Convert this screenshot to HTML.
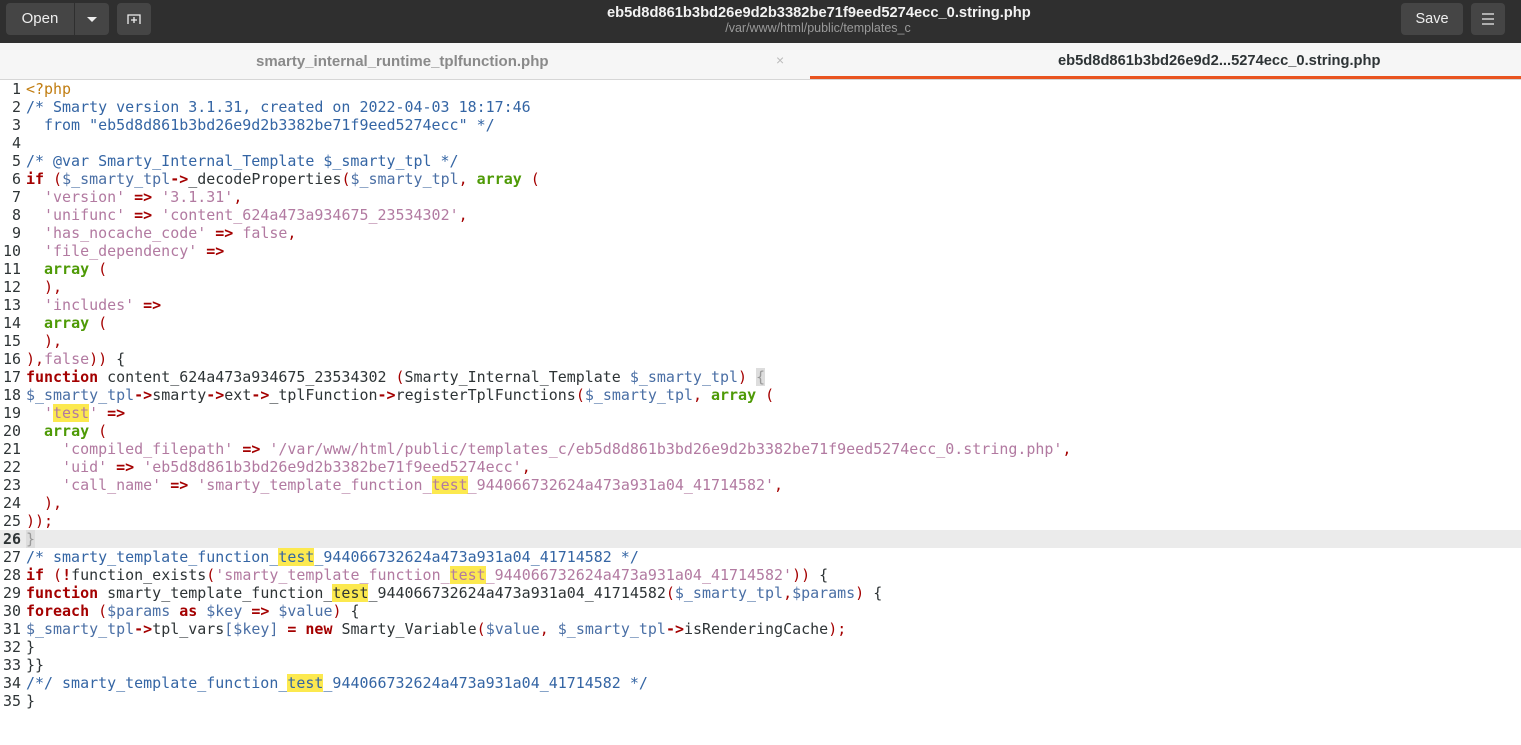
<!DOCTYPE html>
<html><head><meta charset="utf-8"><style>
*{margin:0;padding:0;box-sizing:border-box}
body{width:1521px;height:745px;overflow:hidden;background:#fff;font-family:"Liberation Sans",sans-serif;position:relative}
.hdr{position:absolute;left:0;top:0;width:1521px;height:43px;background:#2f2f2f}
.btn{position:absolute;background:#454545;border-radius:4px;color:#eee;font-size:15px;text-align:center}
.title{position:absolute;left:607px;top:5px;color:#f2f2f2;font-weight:bold;font-size:14.7px;white-space:nowrap}
.sub{position:absolute;left:0;width:1636px;top:21px;text-align:center;color:#9a9a9a;font-size:12.5px}
.tabs{position:absolute;left:0;top:43px;width:1521px;height:37px;background:#f6f6f6;border-bottom:1px solid #d6d6d6}
.tab{position:absolute;top:10px;font-size:14.7px;font-weight:bold;white-space:nowrap}
.code{position:absolute;left:0;top:80px;font-family:"DejaVu Sans Mono","Liberation Mono",monospace;font-size:14.97px;line-height:18px;color:#2e3436}
.ln{display:block;height:18px;white-space:pre}
.n{display:inline-block;width:21px;text-align:right;margin-right:5px;color:#2e3436}
.cur{background:#ebebeb;width:1521px}
.k{color:#a40000;font-weight:bold}.o{color:#a40000;font-weight:bold}.p{color:#a40000}
.s{color:#b27aa1}.c{color:#3465a4}.v{color:#4a6fa5}.g{color:#4e9a06;font-weight:bold}.pp{color:#c17d11}
.h{background:#fce94f}
</style></head><body>
<div class="hdr">
<div class="btn" style="left:6px;top:3px;height:32px;border-radius:4px 0 0 4px;line-height:32px;width:68px">Open</div>
<div class="btn" style="left:75px;top:3px;width:34px;height:32px;border-radius:0 4px 4px 0"><div style="position:absolute;left:12px;top:14px;width:0;height:0;border-left:5px solid transparent;border-right:5px solid transparent;border-top:5px solid #eee"></div></div>
<div class="btn" style="left:117px;top:3px;width:34px;height:32px"><svg width="34" height="32"><path d="M11 21V12h12v9M17 14v6M14 17h6" stroke="#eee" stroke-width="1.3" fill="none"/></svg></div>
<div class="title">eb5d8d861b3bd26e9d2b3382be71f9eed5274ecc_0.string.php</div>
<div class="sub">/var/www/html/public/templates_c</div>
<div class="btn" style="left:1401px;top:3px;width:62px;height:32px;line-height:32px;font-size:14.5px">Save</div>
<div class="btn" style="left:1471px;top:3px;width:34px;height:32px"><svg width="34" height="32"><path d="M11 11h12M11 16h12M11 21h12" stroke="#eee" stroke-width="1.2"/></svg></div>
</div>
<div class="tabs">
<div class="tab" style="left:256px;color:#8a8a8a;font-size:15px">smarty_internal_runtime_tplfunction.php</div>
<div style="position:absolute;left:776px;top:9px;color:#bbb;font-size:14px">×</div>
<div class="tab" style="left:1058px;color:#2e3436">eb5d8d861b3bd26e9d2...5274ecc_0.string.php</div>
<div style="position:absolute;left:810px;top:33px;width:711px;height:3px;background:#e95420"></div>
</div>
<div class="code">
<span class="ln"><span class="n">1</span><span class="pp">&lt;?php</span></span>
<span class="ln"><span class="n">2</span><span class="c">/* Smarty version 3.1.31, created on 2022-04-03 18:17:46</span></span>
<span class="ln"><span class="n">3</span><span class="c">  from "eb5d8d861b3bd26e9d2b3382be71f9eed5274ecc" */</span></span>
<span class="ln"><span class="n">4</span></span>
<span class="ln"><span class="n">5</span><span class="c">/* @var Smarty_Internal_Template $_smarty_tpl */</span></span>
<span class="ln"><span class="n">6</span><span class="k">if</span> <span class="p">(</span><span class="v">$_smarty_tpl</span><span class="o">-&gt;</span>_decodeProperties<span class="p">(</span><span class="v">$_smarty_tpl</span><span class="p">,</span> <span class="g">array</span> <span class="p">(</span></span>
<span class="ln"><span class="n">7</span>  <span class="s">'version'</span> <span class="o">=&gt;</span> <span class="s">'3.1.31'</span><span class="p">,</span></span>
<span class="ln"><span class="n">8</span>  <span class="s">'unifunc'</span> <span class="o">=&gt;</span> <span class="s">'content_624a473a934675_23534302'</span><span class="p">,</span></span>
<span class="ln"><span class="n">9</span>  <span class="s">'has_nocache_code'</span> <span class="o">=&gt;</span> <span class="s">false</span><span class="p">,</span></span>
<span class="ln"><span class="n">10</span>  <span class="s">'file_dependency'</span> <span class="o">=&gt;</span></span>
<span class="ln"><span class="n">11</span>  <span class="g">array</span> <span class="p">(</span></span>
<span class="ln"><span class="n">12</span>  <span class="p">),</span></span>
<span class="ln"><span class="n">13</span>  <span class="s">'includes'</span> <span class="o">=&gt;</span></span>
<span class="ln"><span class="n">14</span>  <span class="g">array</span> <span class="p">(</span></span>
<span class="ln"><span class="n">15</span>  <span class="p">),</span></span>
<span class="ln"><span class="n">16</span><span class="p">),</span><span class="s">false</span><span class="p">))</span> {</span>
<span class="ln"><span class="n">17</span><span class="k">function</span> content_624a473a934675_23534302 <span class="p">(</span>Smarty_Internal_Template <span class="v">$_smarty_tpl</span><span class="p">)</span> <span style="background:#ddd;color:#999">{</span></span>
<span class="ln"><span class="n">18</span><span class="v">$_smarty_tpl</span><span class="o">-&gt;</span>smarty<span class="o">-&gt;</span>ext<span class="o">-&gt;</span>_tplFunction<span class="o">-&gt;</span>registerTplFunctions<span class="p">(</span><span class="v">$_smarty_tpl</span><span class="p">,</span> <span class="g">array</span> <span class="p">(</span></span>
<span class="ln"><span class="n">19</span>  <span class="s">'<span class="h">test</span>'</span> <span class="o">=&gt;</span></span>
<span class="ln"><span class="n">20</span>  <span class="g">array</span> <span class="p">(</span></span>
<span class="ln"><span class="n">21</span>    <span class="s">'compiled_filepath'</span> <span class="o">=&gt;</span> <span class="s">'/var/www/html/public/templates_c/eb5d8d861b3bd26e9d2b3382be71f9eed5274ecc_0.string.php'</span><span class="p">,</span></span>
<span class="ln"><span class="n">22</span>    <span class="s">'uid'</span> <span class="o">=&gt;</span> <span class="s">'eb5d8d861b3bd26e9d2b3382be71f9eed5274ecc'</span><span class="p">,</span></span>
<span class="ln"><span class="n">23</span>    <span class="s">'call_name'</span> <span class="o">=&gt;</span> <span class="s">'smarty_template_function_<span class="h">test</span>_944066732624a473a931a04_41714582'</span><span class="p">,</span></span>
<span class="ln"><span class="n">24</span>  <span class="p">),</span></span>
<span class="ln"><span class="n">25</span><span class="p">));</span></span>
<span class="ln cur"><span class="n" style="font-weight:bold">26</span><span style="background:#ddd;color:#999">}</span></span>
<span class="ln"><span class="n">27</span><span class="c">/* smarty_template_function_<span class="h">test</span>_944066732624a473a931a04_41714582 */</span></span>
<span class="ln"><span class="n">28</span><span class="k">if</span> <span class="p">(</span><span class="o">!</span>function_exists<span class="p">(</span><span class="s">'smarty_template_function_<span class="h">test</span>_944066732624a473a931a04_41714582'</span><span class="p">))</span> {</span>
<span class="ln"><span class="n">29</span><span class="k">function</span> smarty_template_function_<span class="h">test</span>_944066732624a473a931a04_41714582<span class="p">(</span><span class="v">$_smarty_tpl</span><span class="p">,</span><span class="v">$params</span><span class="p">)</span> {</span>
<span class="ln"><span class="n">30</span><span class="k">foreach</span> <span class="p">(</span><span class="v">$params</span> <span class="k">as</span> <span class="v">$key</span> <span class="o">=&gt;</span> <span class="v">$value</span><span class="p">)</span> {</span>
<span class="ln"><span class="n">31</span><span class="v">$_smarty_tpl</span><span class="o">-&gt;</span>tpl_vars<span class="v">[$key]</span> <span class="o">=</span> <span class="k">new</span> Smarty_Variable<span class="p">(</span><span class="v">$value</span><span class="p">,</span> <span class="v">$_smarty_tpl</span><span class="o">-&gt;</span>isRenderingCache<span class="p">);</span></span>
<span class="ln"><span class="n">32</span>}</span>
<span class="ln"><span class="n">33</span>}}</span>
<span class="ln"><span class="n">34</span><span class="c">/*/ smarty_template_function_<span class="h">test</span>_944066732624a473a931a04_41714582 */</span></span>
<span class="ln"><span class="n">35</span>}</span>
</div>
</body></html>
